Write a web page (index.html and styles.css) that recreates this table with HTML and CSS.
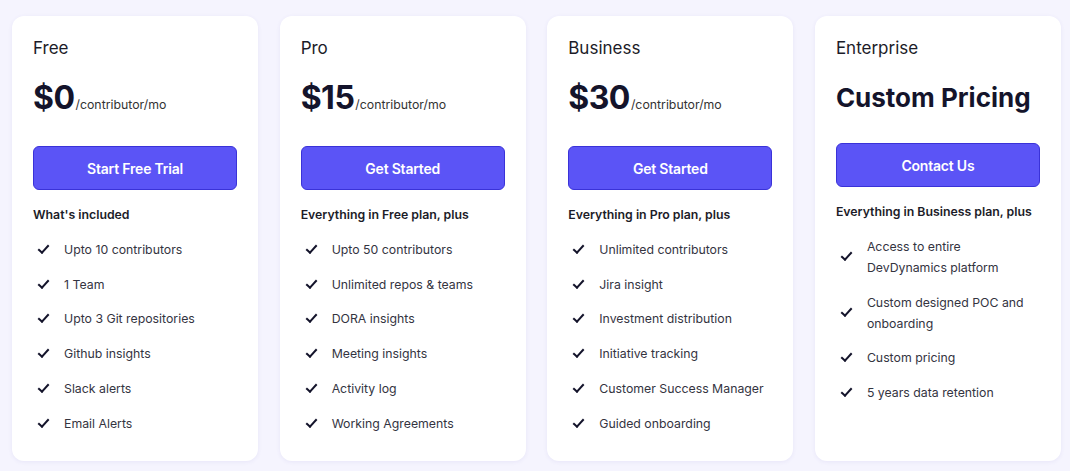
FILE: index.html
```html
<!DOCTYPE html>
<html lang="en">
  <head>
    <meta charset="UTF-8" />
    <meta name="viewport" content="width=device-width, initial-scale=1.0" />
    <title>Pricing</title>
    <link rel="stylesheet" href="styles.css">
  </head>
  <body>
    <div class="plans">
      <div class="plan">
        <h2 class="plan-name">Free</h2>
        <div class="price"><span class="amount">$0</span><span class="unit">/contributor/mo</span></div>
        <button class="cta">Start Free Trial</button>
        <h3 class="included">What's included</h3>
        <ul class="features">
          <li><span class="check"></span><span>Upto 10 contributors</span></li>
          <li><span class="check"></span><span>1 Team</span></li>
          <li><span class="check"></span><span>Upto 3 Git repositories</span></li>
          <li><span class="check"></span><span>Github insights</span></li>
          <li><span class="check"></span><span>Slack alerts</span></li>
          <li><span class="check"></span><span>Email Alerts</span></li>
        </ul>
      </div>

      <div class="plan">
        <h2 class="plan-name">Pro</h2>
        <div class="price"><span class="amount">$15</span><span class="unit">/contributor/mo</span></div>
        <button class="cta">Get Started</button>
        <h3 class="included">Everything in Free plan, plus</h3>
        <ul class="features">
          <li><span class="check"></span><span>Upto 50 contributors</span></li>
          <li><span class="check"></span><span>Unlimited repos &amp; teams</span></li>
          <li><span class="check"></span><span>DORA insights</span></li>
          <li><span class="check"></span><span>Meeting insights</span></li>
          <li><span class="check"></span><span>Activity log</span></li>
          <li><span class="check"></span><span>Working Agreements</span></li>
        </ul>
      </div>

      <div class="plan">
        <h2 class="plan-name">Business</h2>
        <div class="price"><span class="amount">$30</span><span class="unit">/contributor/mo</span></div>
        <button class="cta">Get Started</button>
        <h3 class="included">Everything in Pro plan, plus</h3>
        <ul class="features">
          <li><span class="check"></span><span>Unlimited contributors</span></li>
          <li><span class="check"></span><span>Jira insight</span></li>
          <li><span class="check"></span><span>Investment distribution</span></li>
          <li><span class="check"></span><span>Initiative tracking</span></li>
          <li><span class="check"></span><span>Customer Success Manager</span></li>
          <li><span class="check"></span><span>Guided onboarding</span></li>
        </ul>
      </div>

      <div class="plan">
        <h2 class="plan-name">Enterprise</h2>
        <div class="price custom"><span class="amount">Custom Pricing</span></div>
        <button class="cta">Contact Us</button>
        <h3 class="included">Everything in Business plan, plus</h3>
        <ul class="features">
          <li><span class="check"></span><span>Access to entire<br />DevDynamics platform</span></li>
          <li><span class="check"></span><span>Custom designed POC and<br />onboarding</span></li>
          <li><span class="check"></span><span>Custom pricing</span></li>
          <li><span class="check"></span><span>5 years data retention</span></li>
        </ul>
      </div>
    </div>
  </body>
</html>
```

FILE: styles.css
```css
* {
  margin: 0;
  padding: 0;
  box-sizing: border-box;
  font-family: Inter, 'Noto Sans', sans-serif;
}

body {
  background-color: #f5f4fe;
  height: 100vh;
}

.plans {
  display: flex;
  gap: 21.5px;
  height: 100%;
  padding: 16px 9px 10px 12px;
}

.plan {
  flex: 1;
  background-color: #fff;
  border-radius: 12px;
  box-shadow: 0 1px 4px rgba(80, 70, 180, 0.08);
  padding: 20px 21px;
}

.plan-name {
  font-size: 17px;
  font-weight: 400;
  line-height: 24px;
  color: #1c1c28;
}

.price {
  display: flex;
  align-items: baseline;
  margin-top: 18px;
  height: 40px;
  color: #14142b;
}

.amount {
  font-size: 32px;
  font-weight: 700;
  line-height: 40px;
  letter-spacing: -0.5px;
}

.unit {
  font-size: 12.3px;
  color: #333;
  margin-left: 1px;
}

.price.custom .amount {
  font-size: 26px;
  letter-spacing: 0;
}

.price.custom {
  height: 37px;
}

.cta {
  display: block;
  width: 100%;
  height: 44px;
  margin-top: 28px;
  background-color: #5b54f6;
  border: 1px solid #3a32d8;
  border-radius: 6px;
  color: #fff;
  font-size: 14px;
  font-weight: 600;
  letter-spacing: -0.2px;
  cursor: pointer;
}

.cta:hover {
  background-color: #4c45e8;
}

.included {
  margin-top: 16px;
  font-size: 12.3px;
  font-weight: 600;
  line-height: 18px;
  color: #1c1c28;
}

.features {
  list-style: none;
  margin-top: 8px;
}

.features li {
  display: flex;
  align-items: center;
  padding: 6.9px 0;
  font-size: 12.3px;
  line-height: 21px;
  color: #34343f;
}

.check {
  flex: none;
  width: 11px;
  height: 6px;
  margin: 0 15px 3px 5px;
  border-left: 2px solid #14142b;
  border-bottom: 2px solid #14142b;
  transform: rotate(-48deg);
}
```
